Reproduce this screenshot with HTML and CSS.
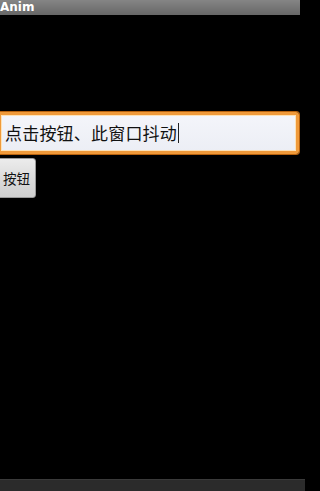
FILE: index.html
```html
<!DOCTYPE html>
<html>
<head>
<meta charset="utf-8">
<link rel="stylesheet" href="styles.css">
</head>
<body>
<div class="screen">
  <div class="titlebar"><span class="title">Anim</span></div>
  <div class="content">
    <div class="edit"><span class="edit-text">点击按钮、此窗口抖动</span><span class="caret"></span></div>
    <div class="button">按钮</div>
  </div>
  <div class="bottombar"></div>
</div>
</body>
</html>
```
FILE: styles.css
```css
html, body {
  margin: 0;
  padding: 0;
  background: #000;
}
.screen {
  width: 305px;
  height: 491px;
  display: flex;
  flex-direction: column;
  background: #000;
  font-family: "Noto Sans CJK SC", "DejaVu Sans", sans-serif;
  overflow: hidden;
}
.titlebar {
  width: 300px;
  height: 15px;
  background: linear-gradient(#858585, #737373 60%, #676767);
  display: flex;
  align-items: center;
}
.title {
  font-family: "DejaVu Sans", sans-serif;
  font-weight: bold;
  font-size: 12px;
  color: #fff;
  margin-left: 0;
  line-height: 15px;
}
.content {
  display: flex;
  flex-direction: column;
  align-items: flex-start;
  padding-top: 97px;
  gap: 4px;
}
.edit {
  box-sizing: border-box;
  width: 301px;
  height: 42px;
  margin-left: -2px;
  border: 3px solid #f09a3a;
  border-radius: 3px;
  box-shadow: inset 0 0 0 1px #fde2b8, 0 0 0 1px #b8620e;
  background: linear-gradient(#f4f5fa, #eceef5);
  display: flex;
  align-items: center;
  padding-left: 4px;
}
.edit-text {
  font-size: 17px;
  color: #111;
  letter-spacing: 0.2px;
  line-height: 20px;
}
.caret {
  width: 1px;
  height: 20px;
  background: #222;
  margin-left: 1px;
}
.button {
  box-sizing: border-box;
  width: 40px;
  height: 40px;
  margin-left: -4px;
  padding-left: 6px;
  border-radius: 3px;
  background: linear-gradient(#ececec, #dcdcdc 50%, #cfcfcf);
  border: 1px solid #9a9a9a;
  font-size: 13.5px;
  color: #111;
  display: flex;
  align-items: center;
}
.bottombar {
  margin-top: auto;
  height: 11px;
  width: 305px;
  background: #2b2b2b;
  border-top: 1px solid #3a3a3a;
}
```
